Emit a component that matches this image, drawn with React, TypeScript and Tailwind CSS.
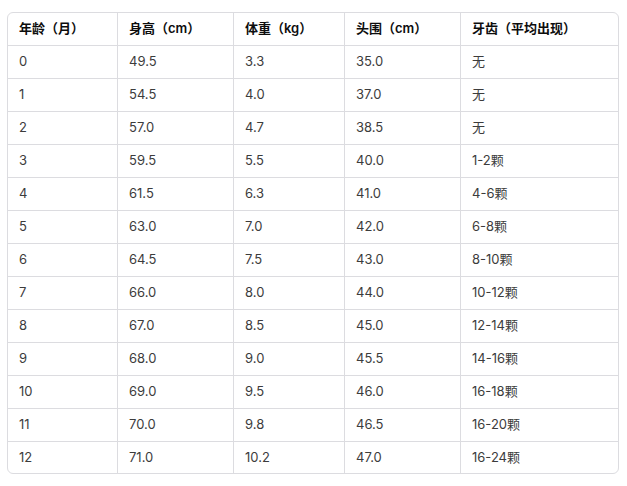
import React from "react";

const header = ["年龄（月）", "身高（cm）", "体重（kg）", "头围（cm）", "牙齿（平均出现）"];
const rows = [
  ["0", "49.5", "3.3", "35.0", "无"],
  ["1", "54.5", "4.0", "37.0", "无"],
  ["2", "57.0", "4.7", "38.5", "无"],
  ["3", "59.5", "5.5", "40.0", "1-2颗"],
  ["4", "61.5", "6.3", "41.0", "4-6颗"],
  ["5", "63.0", "7.0", "42.0", "6-8颗"],
  ["6", "64.5", "7.5", "43.0", "8-10颗"],
  ["7", "66.0", "8.0", "44.0", "10-12颗"],
  ["8", "67.0", "8.5", "45.0", "12-14颗"],
  ["9", "68.0", "9.0", "45.5", "14-16颗"],
  ["10", "69.0", "9.5", "46.0", "16-18颗"],
  ["11", "70.0", "9.8", "46.5", "16-20颗"],
  ["12", "71.0", "10.2", "47.0", "16-24颗"],
];

const cols = "grid grid-cols-[110px_116px_111px_116px_1fr]";

export default function App() {
  return (
    <div className="w-[627px] h-[486px] bg-white pt-[12px] px-[7px] [font-family:Inter,'Noto_Sans_CJK_SC',sans-serif]">
      <div className="w-[612px] border border-[#dcdce0] rounded-[6px] overflow-hidden">
        <div className={`${cols} h-[33px] border-b border-[#dcdce0]`}>
          {header.map((h, i) => (
            <div
              key={i}
              className={`flex items-center px-[11px] text-[13px] font-semibold text-[#0d0d0d] ${i < 4 ? "border-r border-[#dcdce0]" : ""}`}
            >
              {h}
            </div>
          ))}
        </div>
        {rows.map((r, ri) => (
          <div
            key={ri}
            className={`${cols} ${ri < rows.length - 1 ? "h-[33px] border-b border-[#dcdce0]" : "h-[31px]"}`}
          >
            {r.map((c, i) => (
              <div
                key={i}
                className={`flex items-center px-[11px] text-[13px] text-[#3c3c3c] ${i < 4 ? "border-r border-[#dcdce0]" : ""}`}
              >
                {c}
              </div>
            ))}
          </div>
        ))}
      </div>
    </div>
  );
}
